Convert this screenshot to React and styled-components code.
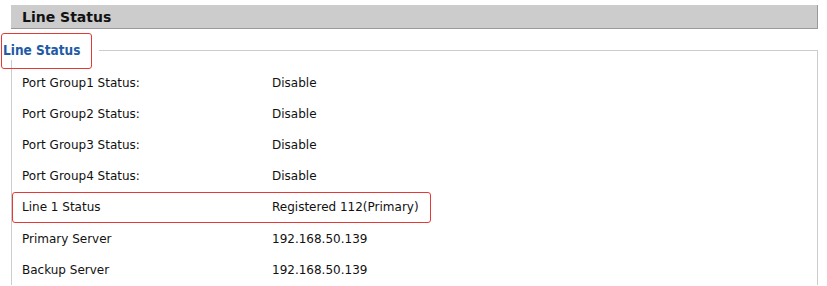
import React from 'react';
import styled, { createGlobalStyle } from 'styled-components';

const GlobalStyle = createGlobalStyle`
    body {
        margin: 0;
        background: #ffffff;
        font-family: 'DejaVu Sans', Verdana, sans-serif;
        color: #111111;
    }
`;

const rows = [
    { label: 'Port Group1 Status:', value: 'Disable' },
    { label: 'Port Group2 Status:', value: 'Disable' },
    { label: 'Port Group3 Status:', value: 'Disable' },
    { label: 'Port Group4 Status:', value: 'Disable' },
    { label: 'Line 1 Status', value: 'Registered 112(Primary)', marked: true },
    { label: 'Primary Server', value: '192.168.50.139' },
    { label: 'Backup Server', value: '192.168.50.139' },
];

const App = () => {
    return (
        <Page>
            <GlobalStyle />
            <TitleBar>Line Status</TitleBar>
            <Group>
                <Legend>Line Status</Legend>
                {rows.map((row) => (
                    <Row key={row.label} $marked={row.marked}>
                        <span>{row.label}</span>
                        <span>{row.value}</span>
                    </Row>
                ))}
            </Group>
        </Page>
    );
}

export const Page = styled.div`
    padding: 5px 9px 0 11px;
`;

export const TitleBar = styled.div`
    box-sizing: border-box;
    height: 24px;
    line-height: 24px;
    padding-left: 11px;
    background-color: #cccccc;
    border-bottom: 1px solid #999999;
    border-right: 1px solid #999999;
    font-size: 14px;
    font-weight: bold;
    color: #111111;
`;

export const Group = styled.fieldset`
    margin: 11px 0 0 0;
    padding: 7px 0 0 0;
    border: 1px solid #cccccc;
    border-bottom: none;
    min-width: 0;
`;

export const Legend = styled.legend`
    position: relative;
    margin-left: -9px;
    padding: 0 19px 0 0;
    height: 20px;
    line-height: 21px;
    background: #ffffff;
    font-family: 'DejaVu Sans Condensed', 'Liberation Sans', sans-serif;
    font-size: 13.5px;
    font-weight: bold;
    color: #1f5aa5;

    &::after {
        content: '';
        position: absolute;
        left: -2px;
        top: -7px;
        width: 91px;
        height: 36px;
        box-sizing: border-box;
        border: 1px solid #e53935;
        border-radius: 3px;
    }
`;

export const Row = styled.div`
    box-sizing: border-box;
    display: grid;
    grid-template-columns: 250px auto;
    align-items: center;
    width: fit-content;
    height: 31.2px;
    padding: 0 11px 0 9px;
    border: 1px solid ${(p) => (p.$marked ? '#e53935' : 'transparent')};
    border-radius: 3px;
    font-size: 12px;
    color: #111111;
`;

export default App;
